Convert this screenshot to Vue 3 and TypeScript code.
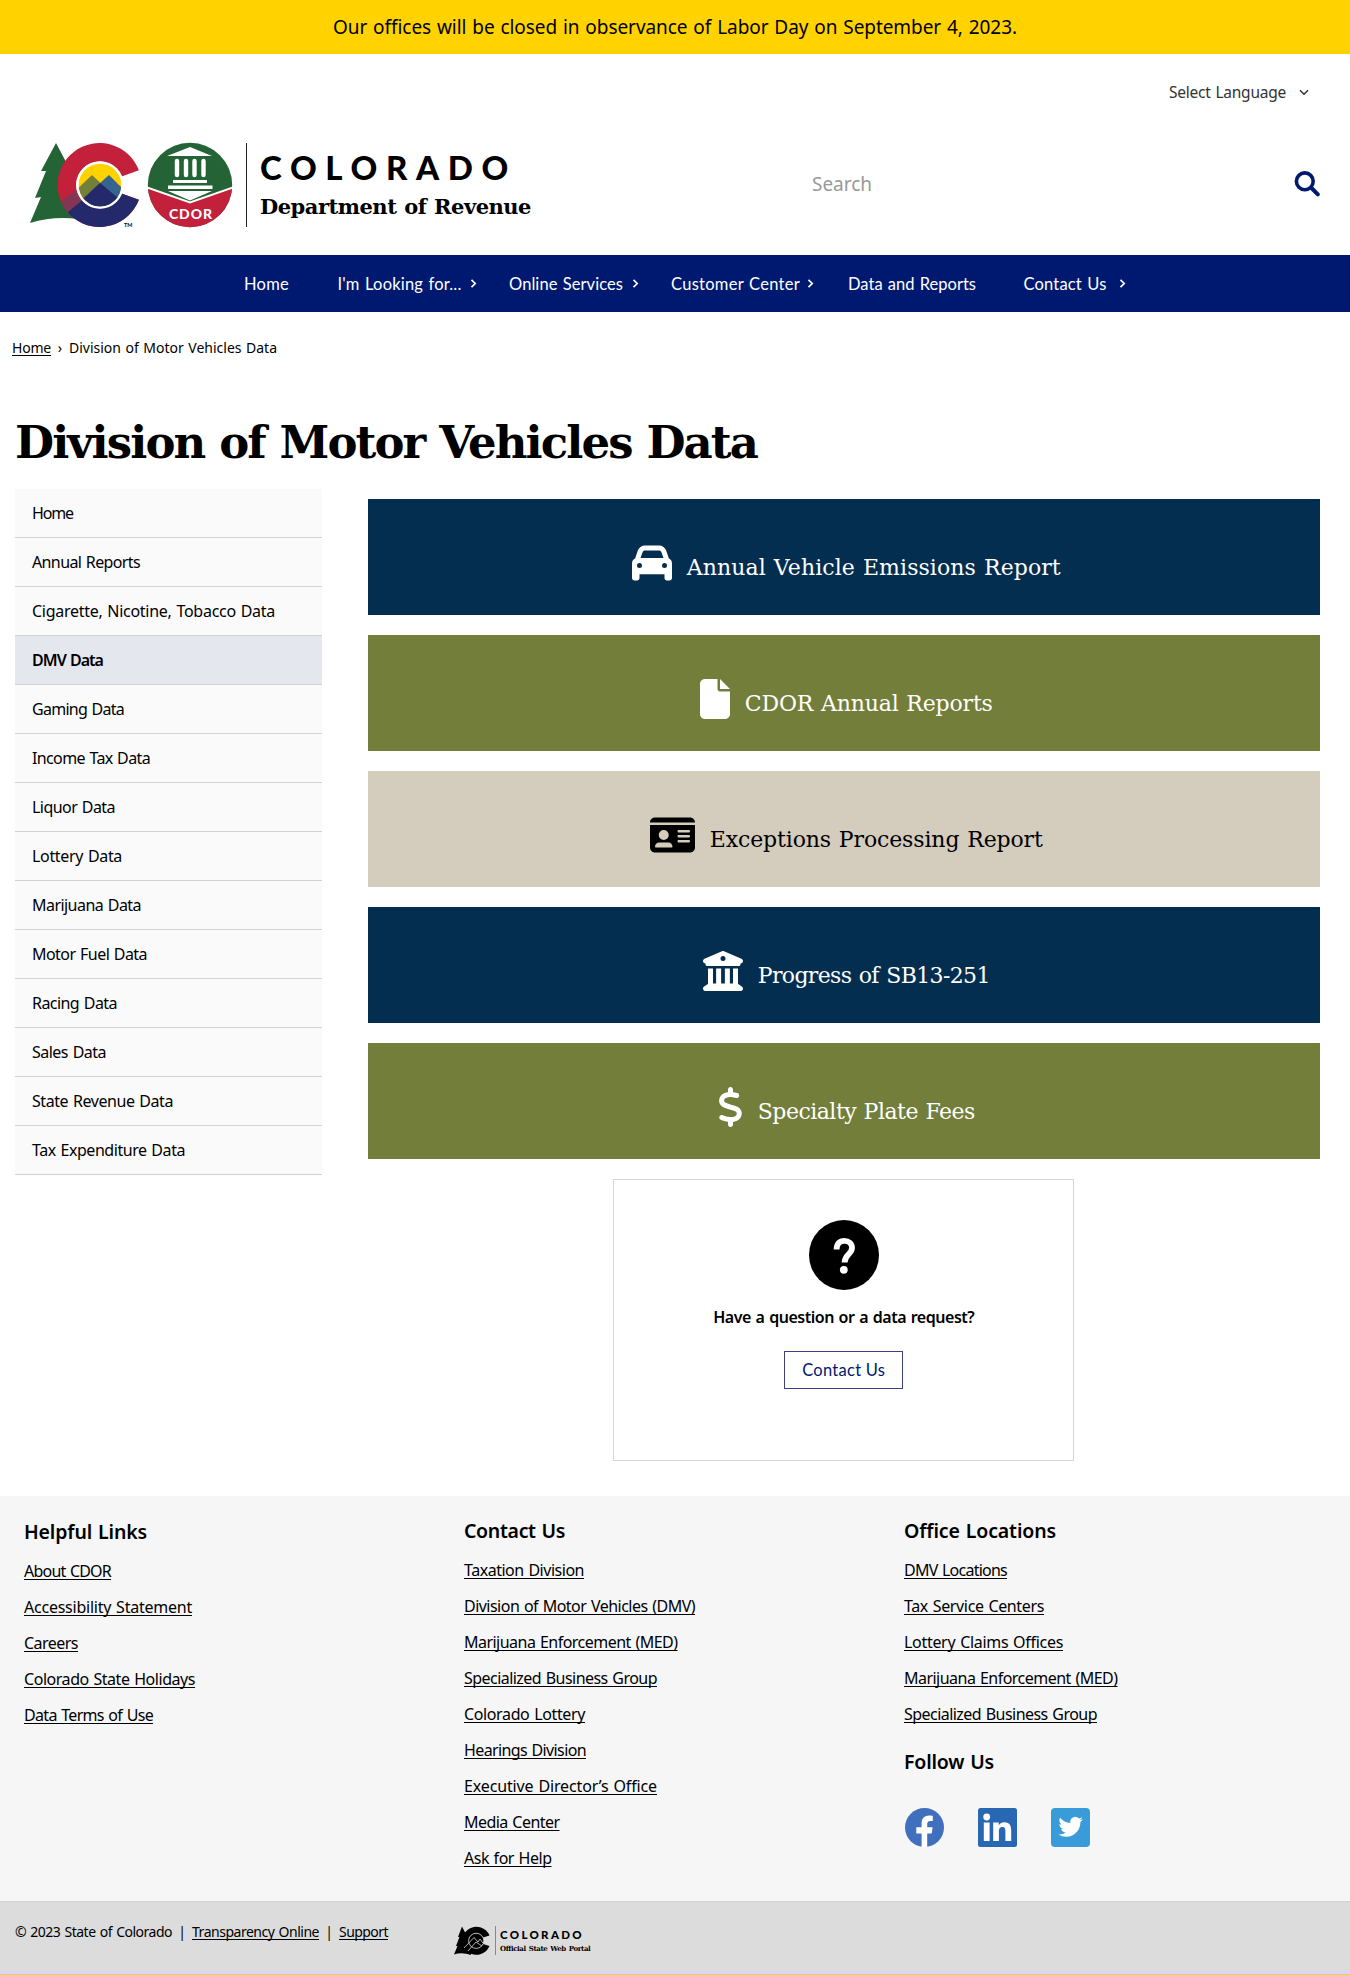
<script setup lang="ts">
interface Label {
  text: string
  width: number
}
interface NavItem extends Label {
  left: number
  arrow?: number
}
interface Card extends Label {
  tone: 'navy' | 'olive' | 'sand'
  box: number
  path: string
}

// Tracks a label out (or in) so that it fills the given width in pixels.
const vFit = {
  mounted(el: HTMLElement, binding: { value: number }) {
    const natural = el.getBoundingClientRect().width
    const count = (el.textContent ?? '').trim().length
    if (count > 0) el.style.letterSpacing = `${((binding.value - natural) / count).toFixed(3)}px`
  },
}

const nav: NavItem[] = [
  { text: 'Home', width: 45, left: 244 },
  { text: "I'm Looking for...", width: 124, left: 48.5, arrow: 8 },
  { text: 'Online Services', width: 114, left: 32.5, arrow: 9 },
  { text: 'Customer Center', width: 129, left: 32, arrow: 7 },
  { text: 'Data and Reports', width: 128, left: 34 },
  { text: 'Contact Us', width: 83, left: 47.5, arrow: 12 },
]

const side: Label[] = [
  { text: 'Home', width: 41 },
  { text: 'Annual Reports', width: 108 },
  { text: 'Cigarette, Nicotine, Tobacco Data', width: 243 },
  { text: 'DMV Data', width: 71 },
  { text: 'Gaming Data', width: 92 },
  { text: 'Income Tax Data', width: 118 },
  { text: 'Liquor Data', width: 83 },
  { text: 'Lottery Data', width: 90 },
  { text: 'Marijuana Data', width: 109 },
  { text: 'Motor Fuel Data', width: 115 },
  { text: 'Racing Data', width: 85 },
  { text: 'Sales Data', width: 74 },
  { text: 'State Revenue Data', width: 141 },
  { text: 'Tax Expenditure Data', width: 153 },
]

const cards: Card[] = [
  {
    text: 'Annual Vehicle Emissions Report', width: 374, tone: 'navy', box: 512,
    path: 'M135.2 117.4L109.1 192H402.9l-26.1-74.6C372.3 104.6 360.2 96 346.6 96H165.4c-13.6 0-25.7 8.6-30.2 21.4zM39.6 196.8L74.8 96.3C88.3 57.8 124.6 32 165.4 32H346.6c40.8 0 77.1 25.8 90.6 64.3l35.2 100.5c23.2 9.6 39.6 32.5 39.6 59.2V400v48c0 17.7-14.3 32-32 32H448c-17.7 0-32-14.3-32-32V400H96v48c0 17.7-14.3 32-32 32H32c-17.7 0-32-14.3-32-32V400 256c0-26.7 16.4-49.6 39.6-59.2zM128 288a32 32 0 1 0 -64 0 32 32 0 1 0 64 0zm288 32a32 32 0 1 0 0-64 32 32 0 1 0 0 64z',
  },
  {
    text: 'CDOR Annual Reports', width: 248, tone: 'olive', box: 384,
    path: 'M0 64C0 28.7 28.7 0 64 0H224V128c0 17.7 14.3 32 32 32H384V448c0 35.3-28.7 64-64 64H64c-35.3 0-64-28.7-64-64V64zm384 64H256V0L384 128z',
  },
  {
    text: 'Exceptions Processing Report', width: 333, tone: 'sand', box: 576,
    path: 'M0 96l576 0c0-35.3-28.7-64-64-64H64C28.7 32 0 60.7 0 96zm0 32V416c0 35.3 28.7 64 64 64H512c35.3 0 64-28.7 64-64V128H0zM64 405.3c0-29.5 23.9-53.3 53.3-53.3H234.7c29.5 0 53.3 23.9 53.3 53.3c0 5.9-4.8 10.7-10.7 10.7H74.7c-5.9 0-10.7-4.8-10.7-10.7zM176 192a64 64 0 1 1 0 128 64 64 0 1 1 0-128zm176 16c0-8.8 7.2-16 16-16H496c8.8 0 16 7.2 16 16s-7.2 16-16 16H368c-8.8 0-16-7.2-16-16zm0 64c0-8.8 7.2-16 16-16H496c8.8 0 16 7.2 16 16s-7.2 16-16 16H368c-8.8 0-16-7.2-16-16zm0 64c0-8.8 7.2-16 16-16H496c8.8 0 16 7.2 16 16s-7.2 16-16 16H368c-8.8 0-16-7.2-16-16z',
  },
  {
    text: 'Progress of SB13-251', width: 232, tone: 'navy', box: 512,
    path: 'M243.4 2.6l-224 96c-14 6-21.8 21-18.7 35.8S16.8 160 32 160v8c0 13.3 10.7 24 24 24H456c13.3 0 24-10.7 24-24v-8c15.2 0 28.3-10.7 31.3-25.6s-4.8-29.9-18.7-35.8l-224-96c-8-3.4-17.2-3.4-25.2 0zM128 224H64V420.3c-.6 .3-1.2 .7-1.8 1.1l-48 32c-11.7 7.8-17 22.4-12.9 35.9S17.9 512 32 512H480c14.1 0 26.5-9.2 30.6-22.7s-1.1-28.1-12.9-35.9l-48-32c-.6-.4-1.2-.7-1.8-1.1V224H384V416H344V224H280V416H232V224H168V416H128V224zM256 64a32 32 0 1 1 0 64 32 32 0 1 1 0-64z',
  },
  {
    text: 'Specialty Plate Fees', width: 217, tone: 'olive', box: 320,
    path: 'M160 0c17.7 0 32 14.3 32 32V67.7c1.6 .2 3.1 .4 4.7 .7c.4 .1 .7 .1 1.1 .2l48 8.8c17.4 3.2 28.9 19.9 25.7 37.2s-19.9 28.9-37.2 25.7l-47.5-8.7c-31.3-4.6-58.9-1.5-78.3 6.2s-27.2 18.3-29 28.1c-2 10.7-.5 16.7 1.2 20.4c1.8 3.9 5.5 8.3 12.8 13.2c16.3 10.7 41.3 17.7 73.7 26.3l2.9 .8c28.6 7.6 63.6 16.8 89.6 33.8c14.2 9.3 27.6 21.9 35.9 39.5c8.5 17.9 10.3 37.9 6.4 59.2c-6.9 38-33.1 63.4-65.6 76.7c-13.7 5.6-28.6 9.2-44.4 11V480c0 17.7-14.3 32-32 32s-32-14.3-32-32V445.1c-.4-.1-.9-.1-1.3-.2l-.2 0 0 0c-24.4-3.8-64.5-14.3-91.5-26.3c-16.1-7.2-23.4-26.1-16.2-42.2s26.1-23.4 42.2-16.2c20.9 9.3 55.3 18.5 75.2 21.6c31.9 4.7 58.2 2 76-5.3c16.9-6.9 24.6-16.9 26.8-28.9c1.9-10.6 .4-16.7-1.3-20.4c-1.9-4-5.6-8.4-13-13.3c-16.4-10.7-41.5-17.7-74-26.3l-2.8-.7 0 0C119.4 279.3 84.4 270 58.4 253c-14.2-9.3-27.5-22-35.8-39.6c-8.4-17.9-10.1-37.9-6.1-59.2C23.7 116 52.3 91.2 84.8 78.3c13.3-5.3 27.9-8.9 43.2-11V32c0-17.7 14.3-32 32-32z',
  },
]

const helpful: Label[] = [
  { text: 'About CDOR', width: 87 },
  { text: 'Accessibility Statement', width: 168 },
  { text: 'Careers', width: 54 },
  { text: 'Colorado State Holidays', width: 171 },
  { text: 'Data Terms of Use', width: 129 },
]
const contact: Label[] = [
  { text: 'Taxation Division', width: 120 },
  { text: 'Division of Motor Vehicles (DMV)', width: 231 },
  { text: 'Marijuana Enforcement (MED)', width: 213.5 },
  { text: 'Specialized Business Group', width: 193 },
  { text: 'Colorado Lottery', width: 121 },
  { text: 'Hearings Division', width: 122 },
  { text: 'Executive Director’s Office', width: 193 },
  { text: 'Media Center', width: 95.5 },
  { text: 'Ask for Help', width: 87.5 },
]
const offices: Label[] = [
  { text: 'DMV Locations', width: 103 },
  { text: 'Tax Service Centers', width: 140 },
  { text: 'Lottery Claims Offices', width: 159 },
  { text: 'Marijuana Enforcement (MED)', width: 213.5 },
  { text: 'Specialized Business Group', width: 193 },
]
</script>

<template>
  <div class="page">
    <div class="banner">
      <span v-fit="684">Our offices will be closed in observance of Labor Day on September 4, 2023.</span>
    </div>

    <header class="head">
      <div class="language">
        <span v-fit="117">Select Language</span>
        <svg width="10" height="7" viewBox="0 0 10 7"><path d="M1 1.2l4 4 4-4" fill="none" stroke="#333" stroke-width="1.5" /></svg>
      </div>
      <div class="brand-row">
        <div class="brand">
          <svg class="marks" width="206" height="90" viewBox="28 140 206 90">
            <defs>
              <clipPath id="cShape">
                <path d="M138.9 170.3A42 42 0 1 0 138.9 199.7L121.5 193.5A23.5 23.5 0 1 1 121.5 176.5Z" />
              </clipPath>
              <clipPath id="disc"><circle cx="100" cy="185" r="21.3" /></clipPath>
              <clipPath id="seal"><circle cx="190" cy="185" r="42.2" /></clipPath>
            </defs>
            <path d="M56 143L65 160 80 215 78 219Q53 216 30 223L41 197 35 198 46 171 41 171Z" fill="#236335" />
            <g clip-path="url(#cShape)">
              <rect x="57" y="142" width="84" height="86" fill="#c2203b" />
              <path d="M68 211L84 198 100 190 145 188V230H68Z" fill="#23296b" />
              <path d="M57 204L75 191 84 199 68 212Z" fill="#833554" />
            </g>
            <circle cx="100" cy="185" r="23.8" fill="#fff" />
            <g clip-path="url(#disc)">
              <rect x="78" y="163" width="44" height="44" fill="#ffd200" />
              <path d="M76 190L92 175 110 192V208H76Z" fill="#74803a" />
              <path d="M90 192L109 175 124 190V208H90Z" fill="#34648f" />
              <path d="M76 205L100 183 124 203V208H76Z" fill="#23296b" />
            </g>
            <text x="124" y="226.5" class="tm">TM</text>
            <g clip-path="url(#seal)">
              <rect x="147" y="142" width="86" height="86" fill="#236335" />
              <path d="M147 187L190 202 233 187V230H147Z" fill="#c2203b" />
              <path d="M147 187.5L190 202.5 233 187.5" fill="none" stroke="#fff" stroke-width="2" />
              <path d="M167 156L190 147 212 156Z M168 191H212L190 200.5Z M173 180H207V183H173Z M168 185.5H212.5V189H168Z" fill="#fff" />
              <path d="M177 161V175M186 161V175M194.5 161V175M203.5 161V175" stroke="#fff" stroke-width="4.4" stroke-linecap="round" />
            </g>
            <text x="169" y="219" class="seal-text" textLength="43" lengthAdjust="spacing">CDOR</text>
          </svg>
          <div class="rule"></div>
          <div class="brand-text">
            <div class="state"><span v-fit="257">COLORADO</span></div>
            <div class="dept"><span v-fit="271">Department of Revenue</span></div>
          </div>
        </div>
        <div class="search">
          <span v-fit="60">Search</span>
          <svg width="26" height="26" viewBox="0 0 26 26" fill="none" stroke="#001970" stroke-linecap="round">
            <circle cx="10.8" cy="10.3" r="8.4" stroke-width="3.6" />
            <path d="M17.5 17l6.300 6.300" stroke-width="4" />
          </svg>
        </div>
      </div>
    </header>

    <nav class="nav">
      <a v-for="item in nav" :key="item.text" :style="{ marginLeft: item.left + 'px' }">
        <span v-fit="item.width">{{ item.text }}</span>
        <svg v-if="item.arrow" :style="{ marginLeft: item.arrow + 'px' }" width="7" height="9" viewBox="0 0 7 9">
          <path d="M1.5 .8l3.700 3.700-3.700 3.700" fill="none" stroke="#fff" stroke-width="1.700" />
        </svg>
      </a>
    </nav>

    <div class="crumbs">
      <a><span v-fit="39">Home</span></a>
      <span class="sep">›</span>
      <span v-fit="208">Division of Motor Vehicles Data</span>
    </div>

    <h1><span v-fit="742">Division of Motor Vehicles Data</span></h1>

    <main class="content">
      <ul class="side">
        <li v-for="item in side" :key="item.text" :class="{ active: item.text === 'DMV Data' }">
          <span v-fit="item.width">{{ item.text }}</span>
        </li>
      </ul>
      <section class="main">
        <a v-for="card in cards" :key="card.text" class="card" :class="card.tone">
          <svg :width="(card.box * 40) / 512" height="40" :viewBox="`0 0 ${card.box} 512`" fill="currentColor"><path :d="card.path" /></svg>
          <span v-fit="card.width">{{ card.text }}</span>
        </a>
        <div class="question">
          <svg width="70" height="70" viewBox="0 0 70 70">
            <circle cx="35" cy="35" r="35" />
            <path d="M27.600 29.500C27.600 23.800 30.600 20.800 35.300 20.800C40 20.800 43 23.700 43 27.800C43 34.300 35.600 34.500 35.600 42.500" fill="none" stroke="#fff" stroke-width="5.800" />
            <circle cx="34.800" cy="49.800" r="3.900" fill="#fff" />
          </svg>
          <p><span v-fit="261">Have a question or a data request?</span></p>
          <button><span v-fit="83">Contact Us</span></button>
        </div>
      </section>
    </main>

    <footer>
      <div class="columns">
        <div class="col first">
          <h2><span v-fit="123">Helpful Links</span></h2>
          <a v-for="l in helpful" :key="l.text"><span v-fit="l.width">{{ l.text }}</span></a>
        </div>
        <div class="col">
          <h2><span v-fit="101">Contact Us</span></h2>
          <a v-for="l in contact" :key="l.text"><span v-fit="l.width">{{ l.text }}</span></a>
        </div>
        <div class="col">
          <h2><span v-fit="152">Office Locations</span></h2>
          <a v-for="l in offices" :key="l.text"><span v-fit="l.width">{{ l.text }}</span></a>
          <h2 class="follow"><span v-fit="90">Follow Us</span></h2>
          <div class="social">
            <svg width="39" height="39" viewBox="0 0 39 39">
              <circle cx="19.500" cy="19.500" r="19.500" fill="#4070bd" />
              <path d="M16.600 39V25.500H11.300V19.300H16.600V15.500C16.600 10.300 19.600 7.500 24.200 7.500C25.800 7.500 27.800 7.800 27.800 7.800V13H25.300C22.900 13 22.200 14.500 22.200 16V19.300H27.600L26.700 25.500H22.200V39Z" fill="#fff" />
            </svg>
            <svg width="39" height="39" viewBox="0 0 39 39">
              <rect width="39" height="39" rx="2.500" fill="#2867b2" />
              <circle cx="8.700" cy="9" r="3.400" fill="#fff" />
              <path d="M5.800 14.600H11.600V33H5.800ZM15.200 14.600H20.700V17.200C21.500 15.700 23.500 14.200 26.400 14.200C32 14.200 33.200 18 33.200 22.800V33H27.400V24C27.400 21.800 27.400 19.100 24.300 19.100C21.400 19.100 20.900 21.400 20.900 23.900V33H15.200Z" fill="#fff" />
            </svg>
            <svg width="39" height="39" viewBox="0 0 39 39">
              <rect width="39" height="39" rx="4" fill="#3a9bd9" />
              <path transform="translate(7.400 6.600) scale(1.020)" d="M23.950 4.570a10 10 0 01-2.820.770 4.960 4.960 0 002.160-2.720c-.950.550-2 .950-3.130 1.180a4.920 4.920 0 00-8.380 4.480C7.690 8.100 4.070 6.130 1.640 3.160a4.820 4.820 0 00-.670 2.480c0 1.710.870 3.210 2.190 4.100a4.900 4.900 0 01-2.230-.620v.060a4.920 4.920 0 003.950 4.830 5 5 0 01-2.210.080 4.940 4.940 0 004.600 3.420A9.870 9.870 0 010 19.540a14 14 0 007.550 2.210c9.050 0 14-7.500 14-13.980 0-.210 0-.420-.020-.630a9.940 9.940 0 002.460-2.550z" fill="#fff" />
            </svg>
          </div>
        </div>
      </div>
      <div class="legal">
        <span v-fit="157">© 2023 State of Colorado</span>
        <span class="bar">|</span>
        <a><span v-fit="127">Transparency Online</span></a>
        <span class="bar">|</span>
        <a><span v-fit="49">Support</span></a>
        <div class="portal">
          <svg width="37" height="30" viewBox="0 0 37 30">
            <path d="M8 .5L15 14 17 29Q8 26 0 28.500L3.500 20H2L5.500 11H4Z" />
            <path d="M35.500 9.500A14 14 0 1 0 35.500 20L29 18A7.500 7.500 0 1 1 29 11.500Z" />
            <circle cx="22.200" cy="14.800" r="7.600" stroke="#dcdcdc" stroke-width=".8" />
            <path d="M10 22L20 11.500 24 16 26 13 29 17M14 25L22 16 28 20" fill="none" stroke="#dcdcdc" stroke-width=".8" />
          </svg>
          <div class="portal-rule"></div>
          <div>
            <div class="portal-state"><span v-fit="84">COLORADO</span></div>
            <div class="portal-sub"><span v-fit="90">Official State Web Portal</span></div>
          </div>
        </div>
      </div>
    </footer>
  </div>
</template>

<style>
body {
  margin: 0;
  background: #fff;
}
</style>

<style scoped>
.page {
  width: 1350px;
  height: 1975px;
  overflow: hidden;
  font-family: 'Noto Sans', 'Open Sans', sans-serif;
  font-size: 16px;
  word-spacing: 1px;
  color: #000;
  background: #fff;
}
.page span {
  display: inline-block;
  white-space: pre;
}
svg {
  display: block;
  flex: none;
}
.banner {
  height: 54px;
  line-height: 55px;
  background: #ffd200;
  text-align: center;
  font-size: 19px;
}
.head {
  height: 201px;
}
.language {
  display: flex;
  justify-content: flex-end;
  align-items: center;
  gap: 13px;
  padding: 26px 41px 1px 0;
  height: 24px;
  line-height: 24px;
  font-size: 15.5px;
  color: #333;
}
.brand-row {
  display: flex;
  padding: 35px 30px 0 28px;
}
.brand {
  display: flex;
  width: 784px;
}
.tm {
  font: 700 5.5px Lato, sans-serif;
}
.seal-text {
  font: 900 14px Lato, sans-serif;
  fill: #fff;
}
.rule {
  width: 1px;
  height: 84px;
  margin: 3px 13px 0 12px;
  background: #222;
}
.state {
  padding-top: 8px;
  height: 38px;
  line-height: 38px;
  font-family: Lato, sans-serif;
  font-size: 33px;
  font-weight: 900;
}
.dept {
  margin-top: 6px;
  height: 30px;
  font: 700 21px/30px 'DejaVu Serif', serif;
}
.search {
  flex: 1;
  display: flex;
  justify-content: space-between;
  height: 26px;
  margin-top: 31px;
  line-height: 26px;
  font-size: 19px;
  color: #999;
}
.nav {
  display: flex;
  height: 57px;
  background: #001970;
  color: #fff;
  font: 16.5px/56px Lato, sans-serif;
}
.nav a {
  display: flex;
  align-items: center;
}
.crumbs {
  display: flex;
  height: 36px;
  padding: 18px 0 0 12px;
  line-height: 36px;
  font-size: 14px;
}
.crumbs a span,
.col a span,
.legal a span {
  text-decoration: underline;
  text-decoration-thickness: 1px;
  text-underline-offset: 2px;
  text-decoration-skip-ink: none;
}
.sep {
  width: 18px;
  text-align: center;
}
h1 {
  margin: 42px 0 0 15px;
  height: 68px;
  font: 700 45px/70px 'DejaVu Serif', serif;
}
.content {
  display: flex;
  height: 1020px;
  padding: 13px 30px 0 15px;
  box-sizing: border-box;
}
.side {
  width: 307px;
  margin: 0;
  padding: 0;
  list-style: none;
}
.side li {
  height: 49px;
  box-sizing: border-box;
  padding-left: 17px;
  border-bottom: 1px solid #d2d2d2;
  background: #fafafa;
  line-height: 48px;
}
.side li.active {
  background: #e4e7ee;
  font-weight: 600;
}
.main {
  width: 952.5px;
  margin-left: 45.5px;
  padding-top: 10px;
}
.card {
  display: flex;
  justify-content: center;
  gap: 15px;
  height: 116px;
  box-sizing: border-box;
  margin-bottom: 20px;
  padding: 44px 0 0 5px;
  font: 22px/49px 'DejaVu Serif', serif;
}
.navy {
  background: #042e50;
  color: #fff;
}
.olive {
  background: #727e3a;
  color: #fff;
}
.sand {
  background: #d4ccbc;
  color: #000;
}
.question {
  display: flex;
  flex-direction: column;
  align-items: center;
  width: 461px;
  height: 282px;
  box-sizing: border-box;
  margin: 0 auto;
  padding-top: 40px;
  border: 1px solid #d6d6d6;
}
.question p {
  margin: 15px 0 0;
  font-weight: 600;
  line-height: 24px;
}
.question button {
  width: 119px;
  height: 38px;
  margin-top: 22px;
  padding: 0;
  border: 1px solid #3c3f80;
  background: #fff;
  color: #001970;
  font: 16.5px/35px Lato, sans-serif;
}
footer {
  background: #f6f6f6;
}
.columns {
  display: grid;
  grid-template-columns: 440px 440px 440px;
  height: 405px;
  padding-left: 24px;
}
.col {
  padding-top: 19px;
}
.col.first {
  padding-top: 20px;
}
.col h2 {
  margin: 0 0 5px;
  font-size: 19.5px;
  font-weight: 600;
  line-height: 32px;
}
.col a {
  display: block;
  line-height: 36px;
}
.col h2.follow {
  margin-top: 14px;
}
.social {
  display: flex;
  gap: 34px;
  padding: 25px 0 0 1px;
}
.legal {
  display: flex;
  height: 69px;
  box-sizing: border-box;
  padding: 19px 0 0 15px;
  border-top: 1px solid #d2d2d2;
  background: #dcdcdc;
  font-size: 14px;
  line-height: 22px;
  box-shadow: 0 4px 0 #dcd6ee, 0 5px 0 #efd04a;
}
.bar {
  width: 20px;
  text-align: center;
}
.portal {
  display: flex;
  margin: 5px 0 0 66px;
}
.portal-rule {
  width: 1px;
  height: 29px;
  margin: 0 4px;
  background: #888;
}
.portal-state {
  height: 18px;
  font: 900 11.5px/18px Lato, sans-serif;
}
.portal-sub {
  font: 700 7px/10px 'DejaVu Serif', serif;
}
</style>
